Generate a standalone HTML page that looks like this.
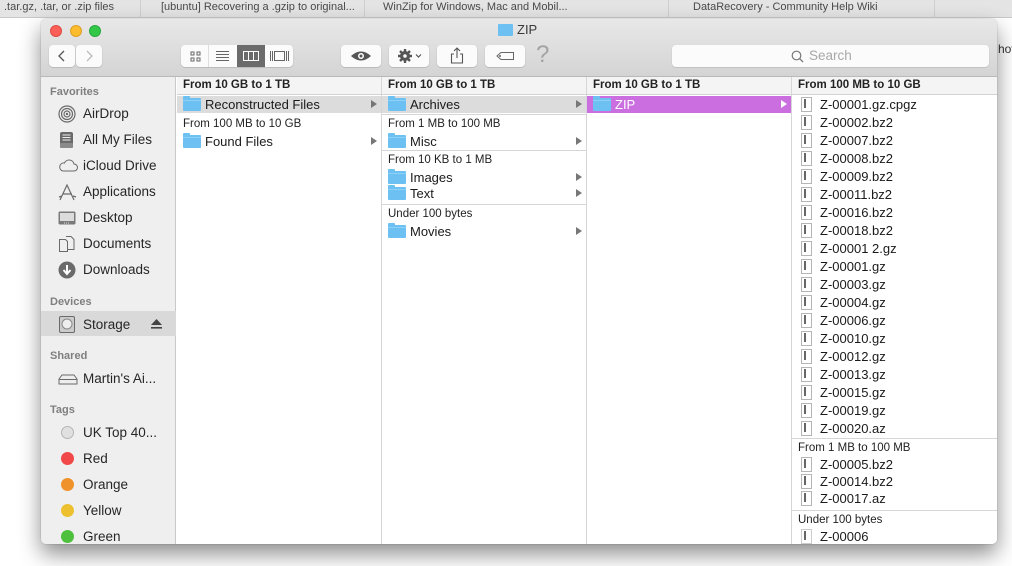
<!DOCTYPE html>
<html><head><meta charset="utf-8"><style>
*{margin:0;padding:0;box-sizing:border-box}
body{width:1012px;height:566px;overflow:hidden;background:#fff;font-family:"Liberation Sans",Helvetica,sans-serif;position:relative}
.abs{position:absolute}
.tabs{left:0;top:0;width:1012px;height:18px;background:#e4e4e4;border-bottom:1px solid #c9c9c9}
.tab{position:absolute;top:0;height:18px;font-size:11px;color:#4a4a4a;line-height:15px;border-right:1px solid #cfcfcf;white-space:nowrap;overflow:hidden}
.win{left:41px;top:19px;width:956px;height:525px;border-radius:5px;overflow:hidden;box-shadow:0 10px 22px rgba(0,0,0,.45),0 0 1px rgba(0,0,0,.4);background:#fff}
.tb{left:0;top:0;width:956px;height:58px;background:linear-gradient(#e8e8e8,#d4d4d4);border-bottom:1px solid #b9b9b9}
.btn{position:absolute;top:26px;height:22px;background:#fbfbfb;border-radius:4px;box-shadow:0 0.5px 1px rgba(0,0,0,.25)}
.side{left:0;top:58px;width:135px;height:467px;background:#efefef;border-right:1px solid #c9c9c9}
.sh{position:absolute;left:9px;font-size:11px;font-weight:bold;color:#7f7f7f}
.si{position:absolute;left:42px;font-size:13.5px;color:#262626;white-space:nowrap}
.ic{position:absolute;left:17px}
.col{position:absolute;top:58px;height:467px;border-right:1px solid #d6d6d6;background:#fff}
.ch{position:absolute;left:0;top:0;width:100%;height:18px;background:#f4f4f4;border-bottom:1px solid #d3d3d3;font-size:11.5px;font-weight:bold;color:#222;padding-left:6px;line-height:17px}
.row{position:absolute;left:0;width:100%;height:17px;font-size:13px;color:#1a1a1a;line-height:17px;white-space:nowrap}
.row .t{position:absolute;left:28px}
.gh{position:absolute;left:6px;font-size:11.5px;color:#222;line-height:17px;margin-top:2px}
.sep{position:absolute;left:0;width:100%;height:1px;background:#d6d6d6}
.fold{position:absolute;left:6px;top:2px;width:18px;height:13px;background:#6cc1f2;border-radius:1px}
.fold:before{content:"";position:absolute;left:0;top:-2px;width:7px;height:3px;background:#6cc1f2;border-radius:1px 1px 0 0}
.fold:after{content:"";position:absolute;left:0;top:2px;width:18px;height:1px;background:#8fd0f6}
.arr{position:absolute;right:4px;top:4px;width:0;height:0;border-left:6px solid #777;border-top:4px solid transparent;border-bottom:4px solid transparent}
.file{position:absolute;left:9px;top:1px;width:11px;height:15px;border:1px solid #b5b5b5;background:#fff}
.file:after{content:"";position:absolute;left:2px;top:1px;width:1.5px;height:9px;background:#666}
.dot{position:absolute;left:20px;width:13px;height:13px;border-radius:50%}
</style></head><body>
<div class="abs tabs">
<div class="tab" style="left:0;width:141px;padding-left:4px">.tar.gz, .tar, or .zip files</div>
<div class="tab" style="left:141px;width:224px;padding-left:20px">[ubuntu] Recovering a .gzip to original...</div>
<div class="tab" style="left:365px;width:304px;padding-left:18px;border-right:1px solid #cfcfcf">WinZip for Windows, Mac and Mobil...</div>
<div class="tab" style="left:669px;width:266px;padding-left:24px">DataRecovery - Community Help Wiki</div>
</div>
<div class="abs" style="left:998px;top:42px;font-size:12px;color:#333">hov</div>
<div class="abs win">
 <div class="abs tb">
  <div class="abs" style="left:9px;top:6px;width:12px;height:12px;border-radius:50%;background:#fc5f57;border:0.5px solid #de4a42"></div>
  <div class="abs" style="left:29px;top:6px;width:12px;height:12px;border-radius:50%;background:#fdbc2e;border:0.5px solid #dea123"></div>
  <div class="abs" style="left:48px;top:6px;width:12px;height:12px;border-radius:50%;background:#33c748;border:0.5px solid #27a93a"></div>
  <div class="abs" style="left:457px;top:5px;width:15px;height:12px;background:#6cc1f2;border-radius:1px"></div>
  <div class="abs" style="left:476px;top:3px;font-size:13px;color:#3a3a3a">ZIP</div>
  <div class="btn" style="left:8px;width:26px"><svg width="26" height="22"><path d="M15 6 L10 11 L15 16" stroke="#555" stroke-width="1.3" fill="none"/></svg></div>
  <div class="btn" style="left:35px;width:26px"><svg width="26" height="22"><path d="M11 6 L16 11 L11 16" stroke="#bbb" stroke-width="1.3" fill="none"/></svg></div>
  <div class="btn" style="left:140px;width:112px;overflow:hidden">
   <svg width="112" height="22" style="position:absolute;left:0;top:0">
    <line x1="27.5" y1="0" x2="27.5" y2="22" stroke="#ddd"/>
    <rect x="10" y="7" width="3" height="3" fill="none" stroke="#666"/><rect x="16" y="7" width="3" height="3" fill="none" stroke="#666"/><rect x="10" y="13" width="3" height="3" fill="none" stroke="#666"/><rect x="16" y="13" width="3" height="3" fill="none" stroke="#666"/>
    <path d="M35 6.5h13M35 9.5h13M35 12.5h13M35 15.5h13" stroke="#666"/>
    <rect x="56" y="0" width="28" height="22" fill="#6b6b6b"/>
    <rect x="62.5" y="6.5" width="15" height="9" fill="none" stroke="#fff"/><path d="M67.5 6.5v9M72.5 6.5v9" stroke="#fff"/>
    <rect x="93.5" y="6.5" width="10" height="9" fill="none" stroke="#666"/><path d="M89.5 6v10M91.5 6v10M105.5 6v10M107.5 6v10" stroke="#666"/>
   </svg></div>
  <div class="btn" style="left:300px;width:40px"><svg width="40" height="22"><path d="M10 11 Q20 2 30 11 Q20 20 10 11Z" fill="#555"/><circle cx="20" cy="11" r="3" fill="#fff"/><circle cx="20" cy="11" r="1.5" fill="#555"/></svg></div>
  <div class="btn" style="left:348px;width:40px"><svg width="40" height="22"><circle cx="16" cy="11" r="5" fill="#555"/><path d="M16 4v14M9 11h14M11 6l10 10M21 6l-10 10" stroke="#555" stroke-width="2.4"/><circle cx="16" cy="11" r="1.8" fill="#fbfbfb"/><path d="M27 9.5l2.5 2.5 2.5-2.5" stroke="#555" fill="none" stroke-width="1.2"/></svg></div>
  <div class="btn" style="left:396px;width:40px"><svg width="40" height="22"><path d="M17 9h-2.5v9h11v-9H23M20 3v10M17 6l3-3 3 3" stroke="#555" stroke-width="1.1" fill="none"/></svg></div>
  <div class="btn" style="left:444px;width:40px"><svg width="40" height="22"><path d="M16 7.5h12.5v7H16l-4-3.5z" stroke="#666" fill="none"/><circle cx="15" cy="11" r="1" fill="#666"/></svg></div>
  <div class="abs" style="left:495px;top:22px;font-size:24px;color:#a3a3a3">?</div>
  <div class="abs" style="left:631px;top:26px;width:317px;height:22px;background:#fbfbfb;border-radius:4px;box-shadow:0 0.5px 1px rgba(0,0,0,.2)">
   <svg width="14" height="14" style="position:absolute;left:119px;top:5px"><circle cx="5.5" cy="5.5" r="4.3" stroke="#777" fill="none" stroke-width="1.2"/><path d="M8.6 8.6l3.5 3.5" stroke="#777" stroke-width="1.3"/></svg>
   <div class="abs" style="left:137px;top:3px;font-size:13.5px;color:#a8a8a8">Search</div>
  </div>
 </div>
 <div class="abs side">
  <div class="sh" style="top:9px">Favorites</div>
  <svg class="ic" style="top:28px" width="18" height="18"><g fill="none" stroke="#6a6a6a" stroke-width="1.2"><circle cx="9" cy="9" r="8"/><circle cx="9" cy="9" r="5.5"/><circle cx="9" cy="9" r="3"/></g><circle cx="9" cy="9" r="1.2" fill="#6a6a6a"/></svg>
  <div class="si" style="top:29px">AirDrop</div>
  <svg class="ic" style="top:54px" width="18" height="18"><rect x="2" y="1" width="13" height="16" rx="2" fill="#6a6a6a"/><path d="M4.5 4h8M4.5 6.5h8M4.5 9h8" stroke="#eee"/><rect x="2" y="12" width="13" height="5" rx="1" fill="#8a8a8a"/></svg>
  <div class="si" style="top:55px">All My Files</div>
  <svg class="ic" style="top:80px" width="20" height="18"><path d="M5 14h11a3.5 3.5 0 0 0 0-7 5 5 0 0 0-9.5-1A4 4 0 0 0 5 14z" fill="none" stroke="#6a6a6a"/></svg>
  <div class="si" style="top:81px">iCloud Drive</div>
  <svg class="ic" style="top:106px" width="20" height="18"><path d="M2 17L9 2l7 15M5 11h9M1 14l3-1M15 13l3 1" stroke="#6a6a6a" fill="none" stroke-width="1.2"/></svg>
  <div class="si" style="top:107px">Applications</div>
  <svg class="ic" style="top:132px" width="18" height="18"><rect x="0.5" y="2.5" width="17" height="13" rx="1.5" fill="#7a7a7a"/><rect x="2" y="4" width="14" height="8" fill="#dcdcdc"/><path d="M6 14h6" stroke="#ddd" stroke-dasharray="1 1"/></svg>
  <div class="si" style="top:133px">Desktop</div>
  <svg class="ic" style="top:158px" width="18" height="18"><path d="M1.5 4.5h6l2 2v10h-8z M8 1.5h5l3 3v10h-6" fill="none" stroke="#6a6a6a"/></svg>
  <div class="si" style="top:159px">Documents</div>
  <svg class="ic" style="top:184px" width="18" height="18"><circle cx="9" cy="9" r="8.5" fill="#6a6a6a"/><path d="M9 4v8M5.5 9l3.5 4 3.5-4" stroke="#fff" stroke-width="2" fill="none"/></svg>
  <div class="si" style="top:185px">Downloads</div>
  <div class="sh" style="top:219px">Devices</div>
  <div class="abs" style="left:0;top:234px;width:135px;height:25px;background:#d9d9d9"></div>
  <svg class="ic" style="top:238px" width="18" height="18"><rect x="1.5" y="1.5" width="15" height="16" rx="1.5" fill="#ccc" stroke="#6a6a6a"/><circle cx="9" cy="9" r="5" fill="#eee" stroke="#888"/></svg>
  <div class="si" style="top:240px">Storage</div>
  <svg class="abs" style="left:110px;top:242px" width="11" height="10"><path d="M5.5 0L11 6H0z" fill="#444"/><rect x="0" y="8" width="11" height="1.6" fill="#444"/></svg>
  <div class="sh" style="top:273px">Shared</div>
  <svg class="ic" style="top:294px" width="20" height="18"><path d="M1 8l3-4h12l3 4v5H1z" fill="#eee" stroke="#6a6a6a"/><path d="M1 8.5h18" stroke="#6a6a6a"/></svg>
  <div class="si" style="top:294px">Martin's Ai...</div>
  <div class="sh" style="top:327px">Tags</div>
  <div class="dot" style="top:349px;background:#e0e0e0;border:1px solid #b5b5b5"></div><div class="si" style="top:348px">UK Top 40...</div>
  <div class="dot" style="top:375px;background:#f1494a"></div><div class="si" style="top:374px">Red</div>
  <div class="dot" style="top:401px;background:#f0922b"></div><div class="si" style="top:400px">Orange</div>
  <div class="dot" style="top:427px;background:#ecc02f"></div><div class="si" style="top:426px">Yellow</div>
  <div class="dot" style="top:453px;background:#4fc03d"></div><div class="si" style="top:452px">Green</div>
 </div>
 <!-- col1 -->
 <div class="col" style="left:136px;width:205px">
  <div class="ch">From 10 GB to 1 TB</div>
  <div class="row" style="top:19px;background:#dcdcdc"><div class="fold"></div><span class="t">Reconstructed Files</span><div class="arr"></div></div>
  <div class="gh" style="top:37px">From 100 MB to 10 GB</div>
  <div class="row" style="top:56px"><div class="fold"></div><span class="t">Found Files</span><div class="arr"></div></div>
 </div>
 <!-- col2 -->
 <div class="col" style="left:341px;width:205px">
  <div class="ch">From 10 GB to 1 TB</div>
  <div class="row" style="top:19px;background:#dcdcdc"><div class="fold"></div><span class="t">Archives</span><div class="arr"></div></div>
  <div class="sep" style="top:37px"></div>
  <div class="gh" style="top:37px">From 1 MB to 100 MB</div>
  <div class="row" style="top:56px"><div class="fold"></div><span class="t">Misc</span><div class="arr"></div></div>
  <div class="sep" style="top:73px"></div>
  <div class="gh" style="top:73px">From 10 KB to 1 MB</div>
  <div class="row" style="top:92px"><div class="fold"></div><span class="t">Images</span><div class="arr"></div></div>
  <div class="row" style="top:108px"><div class="fold"></div><span class="t">Text</span><div class="arr"></div></div>
  <div class="sep" style="top:127px"></div>
  <div class="gh" style="top:127px">Under 100 bytes</div>
  <div class="row" style="top:146px"><div class="fold"></div><span class="t">Movies</span><div class="arr"></div></div>
 </div>
 <!-- col3 -->
 <div class="col" style="left:546px;width:205px">
  <div class="ch">From 10 GB to 1 TB</div>
  <div class="row" style="top:19px;background:#cb6fe0;color:#fff"><div class="fold"></div><span class="t">ZIP</span><div class="arr" style="border-left-color:#fff"></div></div>
 </div>
 <!-- col4 -->
 <div class="col" style="left:751px;width:205px;border-right:none">
  <div class="ch">From 100 MB to 10 GB</div>
  <div class="row" style="top:19px"><div class="file"></div><span class="t">Z-00001.gz.cpgz</span></div>
  <div class="row" style="top:37px"><div class="file"></div><span class="t">Z-00002.bz2</span></div>
  <div class="row" style="top:55px"><div class="file"></div><span class="t">Z-00007.bz2</span></div>
  <div class="row" style="top:73px"><div class="file"></div><span class="t">Z-00008.bz2</span></div>
  <div class="row" style="top:91px"><div class="file"></div><span class="t">Z-00009.bz2</span></div>
  <div class="row" style="top:109px"><div class="file"></div><span class="t">Z-00011.bz2</span></div>
  <div class="row" style="top:127px"><div class="file"></div><span class="t">Z-00016.bz2</span></div>
  <div class="row" style="top:145px"><div class="file"></div><span class="t">Z-00018.bz2</span></div>
  <div class="row" style="top:163px"><div class="file"></div><span class="t">Z-00001 2.gz</span></div>
  <div class="row" style="top:181px"><div class="file"></div><span class="t">Z-00001.gz</span></div>
  <div class="row" style="top:199px"><div class="file"></div><span class="t">Z-00003.gz</span></div>
  <div class="row" style="top:217px"><div class="file"></div><span class="t">Z-00004.gz</span></div>
  <div class="row" style="top:235px"><div class="file"></div><span class="t">Z-00006.gz</span></div>
  <div class="row" style="top:253px"><div class="file"></div><span class="t">Z-00010.gz</span></div>
  <div class="row" style="top:271px"><div class="file"></div><span class="t">Z-00012.gz</span></div>
  <div class="row" style="top:289px"><div class="file"></div><span class="t">Z-00013.gz</span></div>
  <div class="row" style="top:307px"><div class="file"></div><span class="t">Z-00015.gz</span></div>
  <div class="row" style="top:325px"><div class="file"></div><span class="t">Z-00019.gz</span></div>
  <div class="row" style="top:343px"><div class="file"></div><span class="t">Z-00020.az</span></div>
  <div class="sep" style="top:361px"></div>
  <div class="gh" style="top:361px">From 1 MB to 100 MB</div>
  <div class="row" style="top:379px"><div class="file"></div><span class="t">Z-00005.bz2</span></div>
  <div class="row" style="top:396px"><div class="file"></div><span class="t">Z-00014.bz2</span></div>
  <div class="row" style="top:413px"><div class="file"></div><span class="t">Z-00017.az</span></div>
  <div class="sep" style="top:433px"></div>
  <div class="gh" style="top:433px">Under 100 bytes</div>
  <div class="row" style="top:451px"><div class="file" style="border-color:#ccc"></div><span class="t">Z-00006</span></div>
 </div>
</div>
</body></html>
